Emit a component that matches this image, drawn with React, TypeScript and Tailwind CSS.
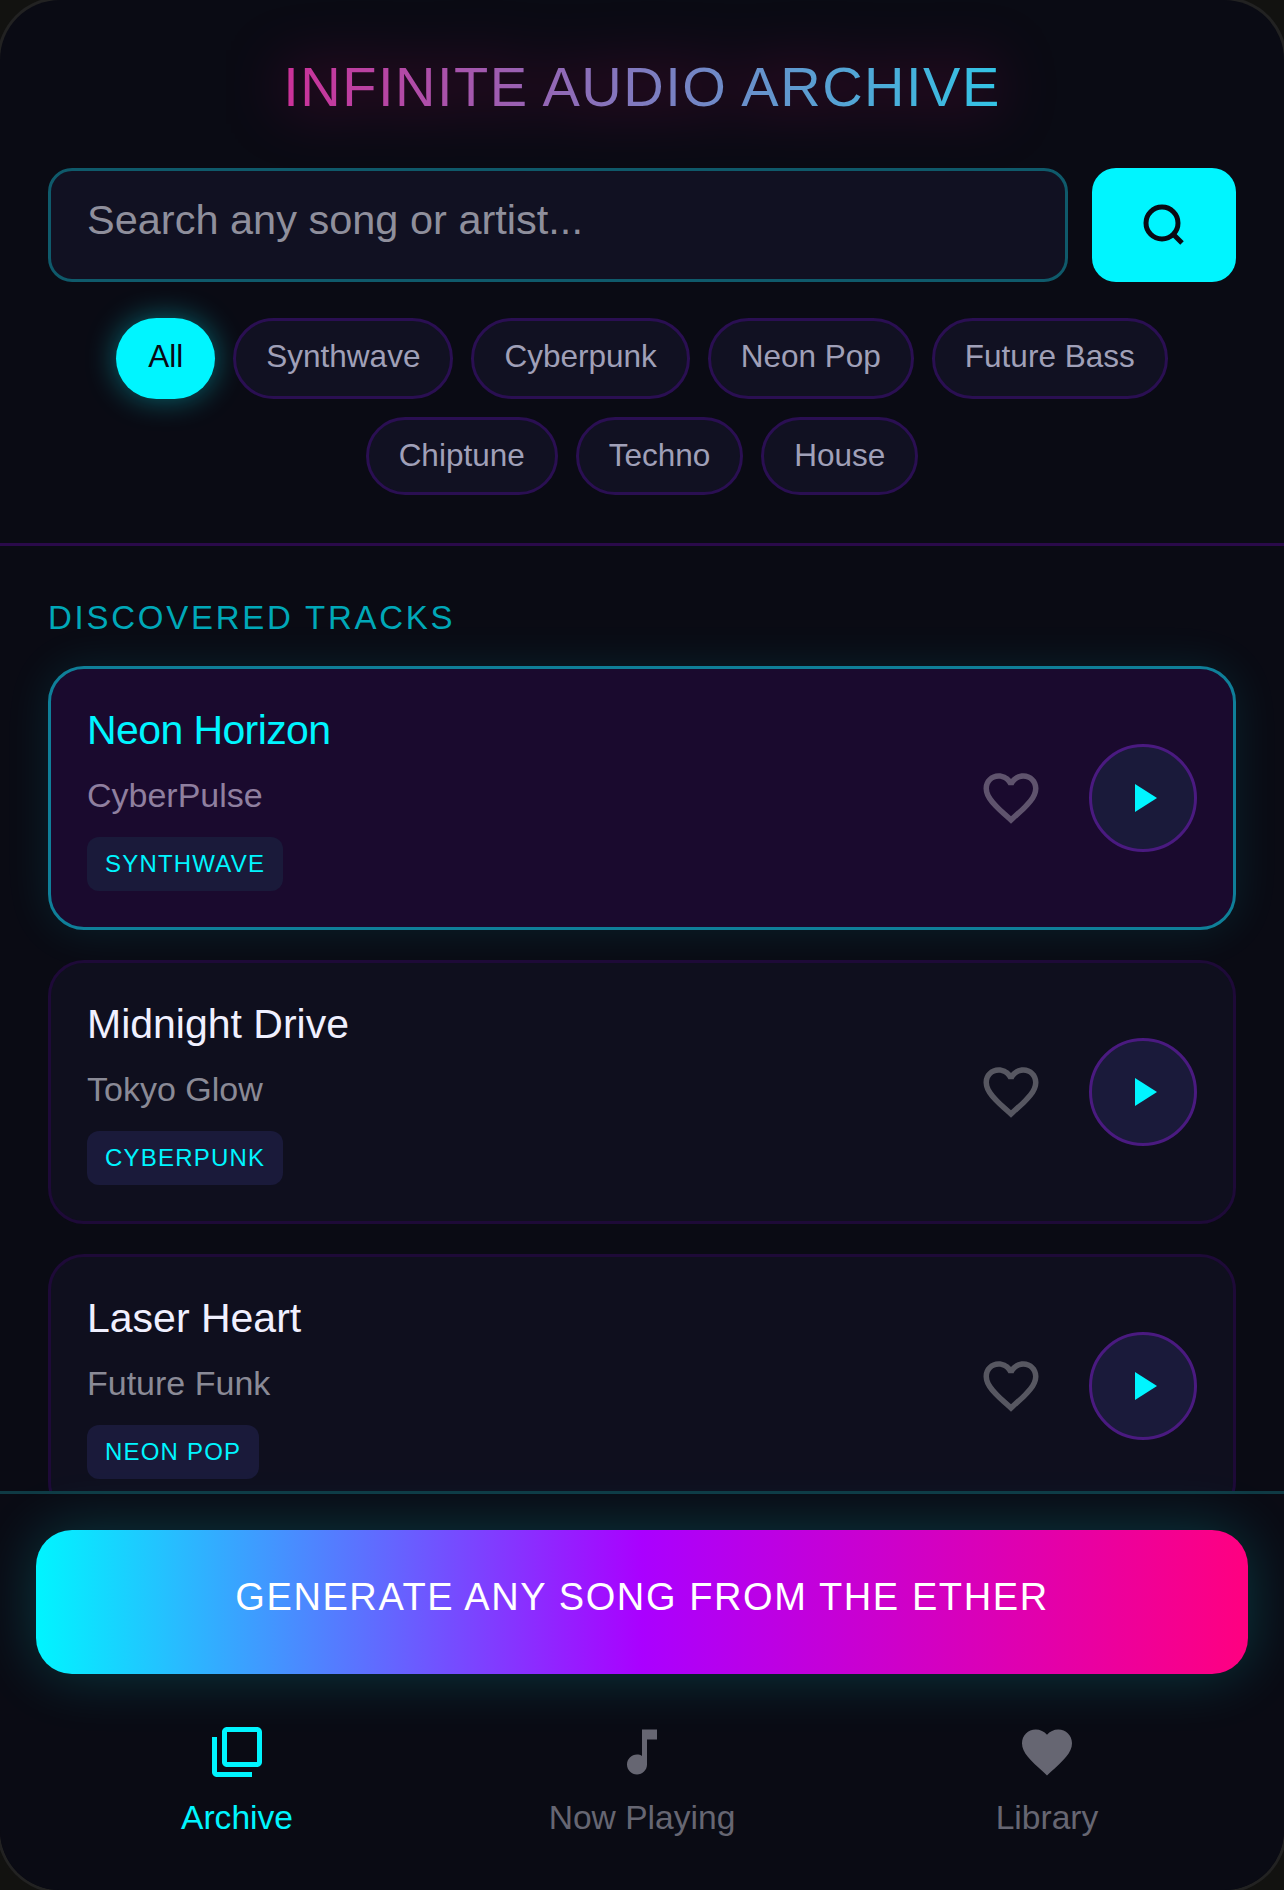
import React from "react";

const Heart = ({ className }: { className?: string }) => (
  <svg viewBox="0 0 24 24" className={className} fill="currentColor">
    <path d="M16.5 3c-1.74 0-3.41.81-4.5 2.09C10.91 3.81 9.24 3 7.5 3 4.42 3 2 5.42 2 8.5c0 3.78 3.4 6.86 8.55 11.54L12 21.35l1.45-1.32C18.6 15.36 22 12.28 22 8.5 22 5.42 19.58 3 16.5 3zm-4.4 15.55l-.1.1-.1-.1C7.14 14.24 4 11.39 4 8.5 4 6.5 5.5 5 7.5 5c1.54 0 3.04.99 3.57 2.36h1.87C13.46 5.99 14.96 5 16.5 5c2 0 3.5 1.5 3.5 3.5 0 2.89-3.14 5.74-7.9 10.05z" />
  </svg>
);

const tracks = [
  { title: "Neon Horizon", artist: "CyberPulse", tag: "SYNTHWAVE", active: true, fit: "tracking-[-0.6px]" },
  { title: "Midnight Drive", artist: "Tokyo Glow", tag: "CYBERPUNK", active: false, fit: "" },
  { title: "Laser Heart", artist: "Future Funk", tag: "NEON POP", active: false, fit: "" },
];

const genres = ["Synthwave", "Cyberpunk", "Neon Pop", "Future Bass", "Chiptune", "Techno", "House"];

function Track({ t }: { t: (typeof tracks)[number] }) {
  return (
    <div
      className={
        "shrink-0 h-[264px] rounded-[36px] border-[3px] px-[36px] flex items-center justify-between " +
        (t.active
          ? "bg-[#1a0a2e] border-[#0f7f99] shadow-[0_0_45px_rgba(0,245,255,0.1)]"
          : "bg-[#0f0f1e] border-[#1e0a38]")
      }
    >
      <div className="flex flex-col items-start pb-[2px]">
        <div className={"text-[41px] leading-[54px] " + t.fit + (t.active ? " text-[#00f5ff]" : " text-[#f0f0ff]")}>{t.title}</div>
        <div className={"text-[34px] leading-[42px] mt-[17px] " + (t.active ? "text-[#8f7f9f]" : "text-[#8a8a96]")}>{t.artist}</div>
        <div className="mt-[21px] h-[54px] px-[18px] flex items-center rounded-[12px] bg-[#1a1a3a] text-[#00f5ff] text-[24px] tracking-[1.2px]">
          {t.tag}
        </div>
      </div>
      <div className="flex items-center gap-[45px]">
        <Heart className="w-[66px] h-[66px] text-white/30" />
        <div className="w-[108px] h-[108px] rounded-full border-[3px] border-[#4a1a80] bg-[#1a1a3a] flex items-center justify-center">
          <svg viewBox="0 0 24 24" className="w-[48px] h-[48px]" fill="#00f5ff">
            <path d="M8 5v14l11-7z" />
          </svg>
        </div>
      </div>
    </div>
  );
}

export default function App() {
  return (
    <div className="w-[1284px] h-[1890px] bg-[#121210] font-['Liberation_Sans',sans-serif]">
      <div className="w-full h-full rounded-[60px] shadow-[0_0_0_3px_#222222] bg-[#0a0b14] overflow-hidden flex flex-col">
        <header className="shrink-0 h-[546px] px-[48px] pt-[48px] border-b-[3px] border-[#2a0a4a]">
          <h1 className="text-center text-[56px] leading-[78px] tracking-[1.5px] text-transparent bg-clip-text bg-[linear-gradient(90deg,#ff0080,#00f5ff)] drop-shadow-[0_0_30px_rgba(255,0,128,0.5)]">
            INFINITE AUDIO ARCHIVE
          </h1>
          <div className="flex gap-[24px] mt-[42px]">
            <div className="flex-1 h-[114px] rounded-[24px] border-[3px] border-[#0f5a6b] bg-[#111122] px-[36px] pb-[9px] flex items-center text-[41.5px] text-[#8f8f9c]">
              Search any song or artist...
            </div>
            <div className="w-[144px] h-[114px] rounded-[24px] bg-[#00f5ff] flex items-center justify-center">
              <svg viewBox="0 0 54 54" className="w-[54px] h-[54px]" fill="none" stroke="#0a0a14" strokeWidth="5">
                <circle cx="25" cy="25" r="16" />
                <path d="M36.5 36.5L45 45" />
              </svg>
            </div>
          </div>
          <div className="flex flex-wrap justify-center gap-[18px] mt-[36px]">
            <div className="flex items-center h-[81px] px-[32px] pb-[4px] rounded-full bg-[#00f5ff] text-[#0a0a14] text-[31.5px] shadow-[0_0_30px_rgba(0,245,255,0.4)]">
              All
            </div>
            {genres.map((c) => (
              <div
                key={c}
                className="flex items-start px-[30px] pt-[14px] pb-[16px] rounded-full border-[3px] border-[#2a0f52] bg-[#111122] text-[#a0a0b8] text-[31.5px] leading-[42px]"
              >
                {c}
              </div>
            ))}
          </div>
        </header>
        <main className="flex-1 min-h-0 overflow-hidden px-[48px] flex flex-col gap-[30px]">
          <div className="shrink-0 mt-[48px] -mb-[6px] text-[33px] leading-[48px] tracking-[2.75px] text-[#00a8b8]">DISCOVERED TRACKS</div>
          {tracks.map((t) => (
            <Track key={t.title} t={t} />
          ))}
        </main>
        <footer className="shrink-0 h-[399px] border-t-[3px] border-[#0f3a44] bg-[#0a0b14]">
          <div className="mx-[36px] mt-[36px] h-[144px] pb-[10px] rounded-[36px] bg-[linear-gradient(90deg,#00f5ff,#aa00ff,#ff0080)] shadow-[0_0_60px_rgba(0,245,255,0.2)] flex items-center justify-center text-white text-[38px] tracking-[1.6px]">
            GENERATE ANY SONG FROM THE ETHER
          </div>
          <nav className="grid grid-cols-[474px_336px_474px] mt-[48px]">
            <div className="flex flex-col items-center text-[#00f5ff]">
              <svg viewBox="0 0 24 24" className="w-[60px] h-[60px]" fill="currentColor">
                <path d="M4 6H2v14c0 1.1.9 2 2 2h14v-2H4V6zm16-4H8c-1.1 0-2 .9-2 2v12c0 1.1.9 2 2 2h12c1.1 0 2-.9 2-2V4c0-1.1-.9-2-2-2zm0 14H8V4h12v12z" />
              </svg>
              <span className="text-[33.6px] leading-[42px] mt-[15px]">Archive</span>
            </div>
            <div className="flex flex-col items-center text-[#666672]">
              <svg viewBox="0 0 24 24" className="w-[60px] h-[60px]" fill="currentColor">
                <path d="M12 3v10.55c-.59-.34-1.27-.55-2-.55-2.21 0-4 1.79-4 4s1.79 4 4 4 4-1.79 4-4V7h4V3h-6z" />
              </svg>
              <span className="text-[33.6px] leading-[42px] mt-[15px]">Now Playing</span>
            </div>
            <div className="flex flex-col items-center text-[#666672]">
              <svg viewBox="0 0 24 24" className="w-[60px] h-[60px]" fill="currentColor">
                <path d="M12 21.35l-1.45-1.32C5.4 15.36 2 12.28 2 8.5 2 5.42 4.42 3 7.5 3c1.74 0 3.41.81 4.5 2.09C13.09 3.81 14.76 3 16.5 3 19.58 3 22 5.42 22 8.5c0 3.78-3.4 6.86-8.55 11.54L12 21.35z" />
              </svg>
              <span className="text-[33.6px] leading-[42px] mt-[15px]">Library</span>
            </div>
          </nav>
        </footer>
      </div>
    </div>
  );
}
